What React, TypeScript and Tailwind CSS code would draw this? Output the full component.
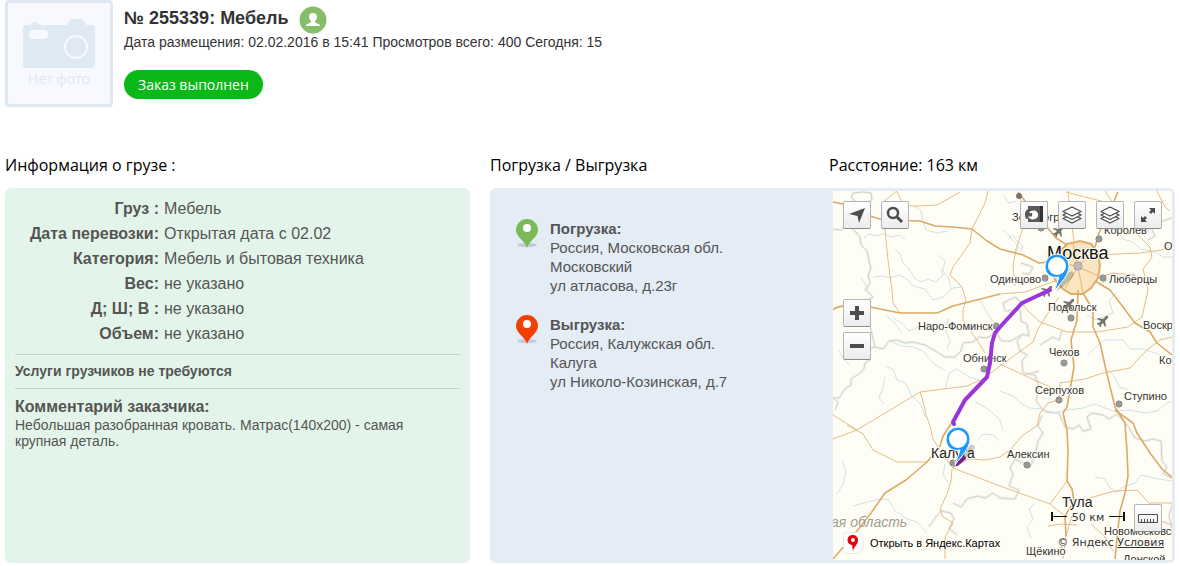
import type { ReactNode } from "react";

const cargo = [
    { label: "Груз :", value: "Мебель" },
    { label: "Дата перевозки:", value: "Открытая дата с 02.02" },
    { label: "Категория:", value: "Мебель и бытовая техника" },
    { label: "Вес:", value: "не указано" },
    { label: "Д; Ш; В :", value: "не указано" },
    { label: "Объем:", value: "не указано" },
];

const stops = [
    { title: "Погрузка:", color: "#7cba59", lines: ["Россия, Московская обл.", "Московский", "ул атласова, д.23г"] },
    { title: "Выгрузка:", color: "#f24005", lines: ["Россия, Калужская обл.", "Калуга", "ул Николо-Козинская, д.7"] },
];

const rivers = [
    "M31 47 L36 43 43 45 50 43 58 46 66 44 72 48 M62 58 L67 63 70 72 76 78 82 88 88 91 95 88 103 91 110 84 108 78 M40 86 L50 85 58 87 66 84 74 88 80 95 92 98 100 109 110 106 120 97 128 96 M81 15 L88 20 90 30 93 39 104 42 115 40",
    "M105 64 L112 70 110 80 116 88 118 98 M28 86 L33 94 32 100 M60 127 L70 133 76 140 88 135 94 138 102 132 110 134 117 128 M52 124 L62 132 68 141",
    "M147 109 L153 120 158 128 162 133 M115 128 L113 140 117 150 114 158 M52 175 L60 178 64 189 73 192 78 204 88 214 92 226 M52 186 L50 196 46 207 51 213",
    "M112 199 L116 182 124 178 136 186 146 189 M142 211 L152 216 160 222 167 229 170 240 M5 158 L10 167 16 174 M57 150 L68 155 80 156 90 160 100 172 112 180",
    "M167 200 L180 205 188 212 197 217 210 218 220 222 234 219 250 217 262 213 280 220 296 219 312 222 324 220 334 212 339 210",
    "M255 164 L264 155 272 149 290 149 297 158 310 158 322 162 332 166 M274 178 L282 186 286 196 294 198 300 210",
    "M175 48 L180 44 184 50 190 55 187 61 M284 40 L290 48 300 51 308 58 322 61 330 66 339 66 M170 39 L178 47 186 56 181 64 M266 93 L274 90 280 82 290 86 302 84 310 89",
    "M202 312 L196 318 200 328 194 336 198 347 M20 315 L34 311 47 308 56 309 62 320 74 328 84 331 94 342 M9 270 L13 280 10 293 4 303 M112 273 L110 284 115 292",
    "M262 286 L272 288 276 296 284 301 290 296 302 292 308 284 326 288 339 290 M144 250 L150 243 160 244 166 249 M254 124 L262 129 270 126 280 122 276 110 284 101 M170 4 L176 12 184 10",
];

const borders = [
    "M18 6 L20 2 30 1 38 2 39 9 31 13 22 10 18 6 M0 38 L8 39 12 36 17 36 22 40 27 46 28 54 34 60 36 70 38 77 35 84 37 92 33 99 40 106 35 109 36 130 42 156",
    "M42 156 L50 158 56 150 64 149 72 152 80 151 92 154 104 161 112 166 122 166 128 160 130 152 140 151 146 146 153 147",
    "M0 207 L6 207 12 198 18 194 18 188 26 183 31 178 32 172 37 169 34 158 42 156 M0 207 L5 211 2 219",
    "M153 147 L164 142 168 150 178 150 190 143 196 145 194 133 188 130 187 119 172 120 170 112 182 106 192 114 M190 143 L184 150 187 160 194 164 189 170 190 182 202 184 206 196 203 210 212 221 226 222 232 236 240 238 246 234 250 240 258 238 254 226 259 222",
    "M207 154 L220 146 226 149 229 140 M205 235 L209 224 M192 184 L206 180",
    "M96 336 L102 327 108 320 118 322 121 328 116 337 124 344 M120 312 L128 316 134 308 145 305 152 307 160 302 167 307 182 308 186 299 176 295 180 283 177 277 182 268 197 276 202 266 205 250 210 242 205 235",
    "M259 222 L270 224 276 228 284 223 294 234 302 247 312 250 320 248 328 250 329 270 334 276 330 283 339 287 M340 312 L336 324 339 338",
    "M188 72 L200 76 196 84 189 82 M312 42 L318 36 322 45 315 49 M323 25 L330 30 339 27",
];

const roads = [
    "M65 -1 L50 11 52 39 55 69 59 99 60 112 67 122",
    "M63 -1 L69 11 78 15 87 15 104 14 127 1",
    "M155 0 L152 12 139 38 137 52 120 76 117 84 129 96 133 109 130 119 130 129 144 149 152 162",
    "M24 239 L87 201 134 195 150 188 167 175 200 151 205 138 217 119 226 106",
    "M0 224 L24 239 M87 201 L90 210 93 224 97 235 100 248 112 267 120 277 167 295 217 313 232 325",
    "M167 173 L197 187 224 199 M14 234 L30 243 40 259 64 271 94 271",
    "M0 248 L24 239 M120 277 L135 268 152 269 167 266 177 259 190 244 204 235 207 222 215 212 226 209",
    "M119 278 L118 290 114 303 107 318 109 325 120 332 112 346 112 368",
    "M189 113 L197 122 207 131 234 141 264 141 295 136 309 126 315 99 310 78 319 66 317 56 300 39",
    "M339 146 L327 149 314 159 297 177 270 182 252 188 227 192 226 209",
    "M257 307 L267 304 282 300 304 299 317 313 328 330 339 334",
    "M235 0 L237 18 241 51 M233 1 L256 7 272 11 M324 0 L332 16 337 20 M265 64 L307 62 328 59 339 56",
    "M182 95 L180 75 183 58 189 40 193 22 185 2 M217 313 L234 290 M239 325 L233 345 230 368",
    "M258 333 L272 346 280 360 M215 335 L228 333 244 334 M218 360 L230 356 M272 0 L281 14 M264 87 L280 82 302 84",
    "M167 103 L192 101 222 90 M201 14 L207 28 215 38 M317 312 L339 312",
];

const highways = [
    "M0 11 L10 13 37 25 50 29 87 30 102 35 120 36 139 38 154 50 167 58 190 64 206 72 224 70",
    "M0 119 Q4 114 20 115 L37 116 67 122 104 122 120 115 167 103",
    "M185 1 L200 20 214 36 223 47 234 54 M285 1 L277 19 266 42 262 56",
    "M245 99 L244 129 238 149 241 176 234 216 230 222 234 239 235 260 234 290 239 298 241 310 232 325 233 345",
    "M250 102 L260 119 260 136 267 152 273 179 282 216 292 232 294 260 295 285 292 302 287 320 284 348 282 368",
    "M282 219 L300 232 304 242 317 262 329 278 340 287",
    "M262 90 L277 99 287 112 302 132 317 141 324 152 339 164",
    "M0 368 L20 345 38 322 52 302 73 289 94 271 107 255 110 245 120 230",
];

const towns = [
    { name: "Королев", x: 271, y: 43, dot: [266, 48] },
    { name: "Одинцово", x: 157, y: 92, dot: [212, 87] },
    { name: "Люберцы", x: 276, y: 92, dot: [270, 87] },
    { name: "Подольск", x: 215, y: 120, dot: [238, 127] },
    { name: "Наро-Фоминск", x: 85, y: 139, dot: [163, 135] },
    { name: "Обнинск", x: 130, y: 171, dot: [151, 178] },
    { name: "Чехов", x: 216, y: 165, dot: [231, 172] },
    { name: "Серпухов", x: 202, y: 203, dot: [226, 209] },
    { name: "Ступино", x: 291, y: 209, dot: [286, 213] },
    { name: "Алексин", x: 174, y: 267, dot: [194, 274] },
    { name: "Воскр", x: 310, y: 138 },
    { name: "Ко", x: 326, y: 173 },
    { name: "О", x: 331, y: 59 },
    { name: "Новомосковск", x: 271, y: 344 },
    { name: "Щёкино", x: 193, y: 364 },
    { name: "Донской", x: 290, y: 372 },
    { name: "Зеленоград", x: 179, y: 30, dot: [208, 37] },
];

const Plane = ({ x, y }: { x: number; y: number }) => (
    <path
        transform={`translate(${x} ${y})`}
        d="M5 -5 L3 -5 0 -2 -5 -3 -6 -2 -2 0 -4 2 -6 2 -6 3 -4 4 -3 6 -2 6 -2 4 0 2 2 6 3 5 2 0 5 -3 Z"
        fill="#77736c"
    />
);

// the origin is the tip of the tail
const MapPin = ({ x, y }: { x: number; y: number }) => (
    <g transform={`translate(${x} ${y})`}>
        <path d="M1 1 L11 -17 Q18 -22 19 -17 Q17 -11 1 1 Z" fill="#444" opacity="0.28" />
        <path
            d="M-1 1 L4 -14 C-4 -12 -10 -17 -10 -25 A12 12 0 0 1 14 -25 C14 -15 5 -8 -1 1 Z"
            fill="#1e98ff"
            stroke="#fff"
            strokeWidth="1"
        />
        <circle cx="2" cy="-25" r="9" fill="#fff" />
    </g>
);

const RouteMap = () => (
    <svg
        className="absolute inset-0 h-full w-full font-['Liberation_Sans',sans-serif]"
        viewBox="0 0 339 369"
        preserveAspectRatio="xMidYMid slice"
        role="img"
        aria-label="Маршрут Московский — Калуга"
    >
        <rect x="-400" y="-400" width="1200" height="1200" fill="#fffef6" />
        <g fill="none" strokeLinejoin="round">
            <g stroke="#f3f2ec" strokeWidth="3">
                {borders.map((d) => <path key={d} d={d} />)}
            </g>
            <g stroke="#d3d2cd" strokeWidth="1">
                {borders.map((d) => <path key={d} d={d} />)}
            </g>
            <g stroke="#cfe2e7" strokeWidth="1">
                {rivers.map((d) => <path key={d} d={d} />)}
            </g>
        </g>
        <path
            d="M234 53 L247 50 258 53 265 62 267 75 265 87 258 97 250 103 238 103 230 98 222 89 220 78 224 64 Z"
            fill="#f9e6c0"
            stroke="#dfae69"
            strokeWidth="2"
        />
        <g fill="none" strokeLinejoin="round">
            <g stroke="#e3bd86" strokeWidth="1">
                {roads.map((d) => <path key={d} d={d} />)}
            </g>
            <g stroke="#dcaa66" strokeWidth="1.6">
                {highways.map((d) => <path key={d} d={d} />)}
            </g>
            <path d="M245 76 L240 52 M245 76 L262 58 M245 76 L266 85 M245 76 L250 102 M245 76 L226 70 M245 76 L232 97" stroke="#e2b470" strokeWidth="1" />
        </g>
        <text x="-2" y="336" fontSize="14" fontStyle="italic" fill="#a19d92">ая область</text>
        <Plane x={226} y={40} />
        <Plane x={214} y={100} />
        <Plane x={270} y={130} />
        <circle cx="186" cy="5" r="3" fill="#77736c" />
        <g fontSize="11" fill="#333" stroke="#fffef6" strokeWidth="2" paintOrder="stroke">
            {towns.map((t) => (
                <g key={t.name}>
                    {t.dot && <circle cx={t.dot[0]} cy={t.dot[1]} r="3" fill="#999" stroke="#55524d" strokeWidth="1" />}
                    <text x={t.x} y={t.y}>{t.name}</text>
                </g>
            ))}
            <circle cx="245" cy="75" r="4" fill="#bbb" stroke="#666" strokeWidth="1" />
            <circle cx="120" cy="272" r="3" fill="#999" stroke="#55524d" strokeWidth="1" />
            <text x="214" y="68" fontSize="18" fill="#111">Москва</text>
            <text x="98" y="267" fontSize="14" fill="#222">Калуга</text>
            <text x="229" y="316" fontSize="14" fill="#222">Тула</text>
        </g>
        <Plane x={236} y={113} />
        <g fill="none" stroke="#9a36d9" strokeWidth="4" strokeLinejoin="round" strokeLinecap="round">
            <path d="M121 233 L120 231 132 209 154 186 157 172 159 152 162 142 167 136 189 112 217 99" />
            <path d="M124 273 L131 267" stroke="#7a1fa8" />
        </g>
        <MapPin x={222} y={100} />
        <MapPin x={123} y={273} />
        <path d="M219 321 V330 M291 321 V330" stroke="#111" strokeWidth="2" />
        <path d="M219 325.500 H234 M276 325.500 H291" stroke="#111" strokeWidth="1" />
    </svg>
);

const MapButton = ({ label, children }: { label: string; children: ReactNode }) => (
    <button
        type="button"
        aria-label={label}
        className="flex size-7 cursor-pointer items-center justify-center rounded-xs border border-[#b5b5b5] border-b-[#8c8c8c] bg-linear-to-b from-white to-[#ececec]"
    >
        <svg width="20" height="20" viewBox="0 0 20 20" fill="none">
            {children}
        </svg>
    </button>
);

const LayersIcon = () => (
    <g stroke="#4d4d4d" strokeWidth="1.3" fill="#fff" strokeLinejoin="round">
        <path d="M1 13.500 L10 9 L19 13.500 L10 18 Z" />
        <path d="M1 10 L10 5.500 L19 10 L10 14.500 Z" />
        <path d="M1 6.500 L10 2 L19 6.500 L10 11 Z" />
    </g>
);

const StopPin = ({ color }: { color: string }) => (
    <svg className="mr-3 shrink-0" width="22" height="30" viewBox="0 0 22 30" aria-hidden="true">
        <ellipse cx="11" cy="26" rx="10" ry="2" fill="#c3ccd8" />
        <path d="M11 29 C9 22 0 18 0 11 A11 11 0 0 1 22 11 C22 18 13 22 11 29 Z" fill={color} />
        <circle cx="11" cy="9" r="4" fill="#fff" />
    </svg>
);

const Header = () => (
    <header className="flex items-start">
        <div className="flex h-[107px] w-[108px] shrink-0 flex-col items-center rounded-sm border-3 border-[#dfe8f2] bg-[#f7f9fe] pt-4">
            <svg width="74" height="50" viewBox="0 0 74 50" aria-hidden="true">
                <path d="M4 6 H9 Q10 3 13 3 Q16 3 17 6 H45 L47 2 Q48 0 50 0 H59 Q61 0 62 2 L64 6 H69 Q73 6 73 10 V45 Q73 49 69 49 H4 Q1 49 1 45 V10 Q1 6 4 6 Z" fill="#dfe9f4" />
                <rect x="7" y="11" width="19" height="9" rx="4" fill="#f7f9fe" />
                <circle cx="54" cy="28" r="11" fill="none" stroke="#f7f9fe" strokeWidth="2" />
            </svg>
            <span className="font-['Open_Sans',sans-serif] text-sm leading-5 text-[#e1e8f2]">Нет фото</span>
        </div>
        <div className="ml-[11px] pt-[6px]">
            <div className="flex h-7 items-center gap-[10px]">
                <h1 className="pb-1 text-lg leading-6 font-bold text-[#333]">№ 255339: Мебель</h1>
                <svg width="28" height="28" viewBox="0 0 28 28" aria-hidden="true">
                    <circle cx="14" cy="14" r="13.500" fill="#85bd6b" />
                    <path d="M14 7 C17 7 18 9 18 11 C18 13 17 14 16 15 V16 C17 18 21 17 21 20 H7 C7 17 11 18 12 16 V15 C11 14 10 13 10 11 C10 9 11 7 14 7 Z" fill="#fff" />
                </svg>
            </div>
            <p className="text-sm leading-4 text-[#333]">Дата размещения: 02.02.2016 в 15:41 Просмотров всего: 400 Сегодня: 15</p>
            <button type="button" className="mt-5 h-[29px] cursor-pointer rounded-full bg-[#0ab917] px-[14px] font-['Open_Sans',sans-serif] text-sm text-white">
                Заказ выполнен
            </button>
        </div>
    </header>
);

const App = () => {
    return (
        <main className="bg-white px-[5px] pb-[3px] font-['Liberation_Sans',Arial,sans-serif] text-[#555]">
            <Header />
            <div className="mt-[46px] flex items-stretch gap-5">
                <section className="flex w-[465px] flex-col">
                    <h2 className="mb-[11px] font-['Open_Sans',sans-serif] text-base leading-6 text-black">Информация о грузе :</h2>
                    <div className="grow rounded-md bg-[#e3f5ea] px-[10px] pt-2">
                        <dl className="grid grid-cols-[144px_1fr] gap-x-[5px] text-base leading-[25px]">
                            {cargo.map((row) => (
                                <div key={row.label} className="contents">
                                    <dt className="text-right font-bold">{row.label}</dt>
                                    <dd>{row.value}</dd>
                                </div>
                            ))}
                        </dl>
                        <p className="mt-2 border-y border-[#c3d6ca] text-sm leading-[33px] font-bold">Услуги грузчиков не требуются</p>
                        <h3 className="mt-2 text-base leading-5 font-bold">Комментарий заказчика:</h3>
                        <p className="max-w-[430px] text-sm leading-4">Небольшая разобранная кровать. Матрас(140х200) - самая крупная деталь.</p>
                    </div>
                </section>

                <section className="grow">
                    <div className="mb-[11px] flex font-['Open_Sans',sans-serif] text-base leading-6 text-black">
                        <h2 className="grow">Погрузка / Выгрузка</h2>
                        <h2 className="w-[346px]">Расстояние: 163 км</h2>
                    </div>
                    <div className="flex rounded-md bg-[#e4ecf6] p-[3px]">
                        <ul className="flex grow flex-col gap-5 pt-7 pl-[23px]">
                            {stops.map((stop) => (
                                <li key={stop.title} className="flex text-[15px] leading-[19px]">
                                    <StopPin color={stop.color} />
                                    <div>
                                        <strong>{stop.title}</strong>
                                        {stop.lines.map((line) => <p key={line}>{line}</p>)}
                                    </div>
                                </li>
                            ))}
                        </ul>
                        <div className="relative flex h-[369px] w-[339px] shrink-0 flex-col overflow-hidden p-[10px]">
                            <RouteMap />
                            <div className="relative flex justify-between">
                                <div className="flex gap-[10px]">
                                    <MapButton label="Моё местоположение">
                                        <path d="M18 3 L12 18 L10.500 11 L2 9 Z" fill="#4d4d4d" />
                                    </MapButton>
                                    <MapButton label="Поиск">
                                        <circle cx="8" cy="8" r="5" stroke="#4d4d4d" strokeWidth="2.5" />
                                        <path d="M12 12 L17 17" stroke="#4d4d4d" strokeWidth="3" />
                                    </MapButton>
                                </div>
                                <div className="flex gap-[10px]">
                                    <MapButton label="Панорамы">
                                        <path d="M4 1 H19 V17 H4 Z" fill="#5a5a5a" />
                                        <path d="M16 1 H19 V17 H16 Z" fill="#333" />
                                        <path d="M2 14 C-1 7 3 3 8 3 C14 3 17 9 13 13 C11 15 7 15 5 13 Z" fill="#5a5a5a" />
                                        <path d="M5 8 C7 5 11 5 13 7 C15 10 14 13 11 14 C8 15 5 14 4 11 C7 13 9 11 8 8 Z" fill="#fff" />
                                    </MapButton>
                                    <MapButton label="Слои"><LayersIcon /></MapButton>
                                    <MapButton label="Пробки"><LayersIcon /></MapButton>
                                    <MapButton label="На весь экран">
                                        <path d="M11 3 H17 V9 L15 7 L13 9 L11 7 L13 5 Z M9 17 H3 V11 L5 13 L7 11 L9 13 L7 15 Z" fill="#4d4d4d" />
                                    </MapButton>
                                </div>
                            </div>
                            <div className="relative mt-[70px] flex flex-col gap-[5px]">
                                <MapButton label="Приблизить">
                                    <path d="M10 3 V17 M3 10 H17" stroke="#4d4d4d" strokeWidth="4" />
                                </MapButton>
                                <MapButton label="Отдалить">
                                    <path d="M3 10 H17" stroke="#4d4d4d" strokeWidth="4" />
                                </MapButton>
                            </div>
                            <div className="relative mt-auto flex justify-end">
                                <span className="mr-[27px] w-[38px] pt-1 text-center font-['DejaVu_Sans',sans-serif] text-[11px] leading-5 whitespace-nowrap text-[#333]">50 км</span>
                                <MapButton label="Измерить расстояние">
                                    <path d="M0.500 6.500 H19.500 V14.500 H0.500 Z M3.500 11 V14 M6.500 11 V14 M9.500 11 V14 M12.500 11 V14 M15.500 11 V14" stroke="#4d4d4d" strokeWidth="1" />
                                </MapButton>
                            </div>
                            <div className="relative -mr-[2px] -mb-1 flex items-center text-[11px] leading-[22px] text-black">
                                <svg className="mr-[6px]" width="21" height="22" viewBox="0 0 21 22" aria-hidden="true">
                                    <path d="M3 0.500 H16 L20 7 V15 L16 21.500 H3 Q0.500 21.500 0.500 19 V3 Q0.500 0.500 3 0.500 Z" fill="#fff" stroke="#e8e8e4" />
                                    <path d="M10 3 A5 5 0 0 1 15 8 C15 13 11 14 10 19 C9 17 10 15 9 13 A5 5 0 0 1 10 3 Z" fill="#e3000b" />
                                    <circle cx="10" cy="8" r="2" fill="#fff" />
                                </svg>
                                <a href="#map">Открыть в Яндекс.Картах</a>
                                <span className="ml-auto font-['DejaVu_Sans',sans-serif] whitespace-nowrap text-[#333]">
                                    © Яндекс <a href="#terms" className="underline">Условия</a>
                                </span>
                            </div>
                        </div>
                    </div>
                </section>
            </div>
        </main>
    );
};

export default App;
